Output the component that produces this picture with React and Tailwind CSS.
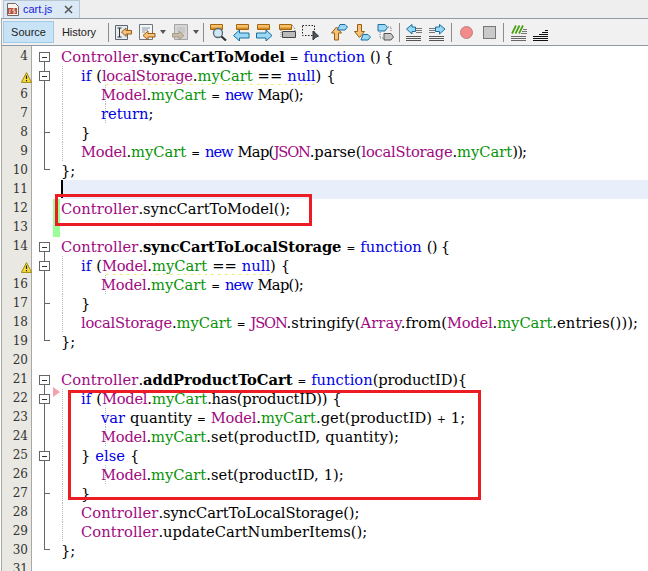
import React from "react";

const P = "text-[#a0097f]";
const G = "text-[#079307]";
const B = "text-[#0000e6]";
const K = "text-black";
const S = "font-bold text-black tracking-[-0.05px]";
const Y = "underline decoration-wavy decoration-[#e8e84a] decoration-1 underline-offset-2";
const CTRL = P + " tracking-[0.1px]";
const MODEL = P + " tracking-[-0.25px]";
const LS = P + " tracking-[-0.25px]";
const JS = P + " tracking-[-1.2px]";

const c = (x) => [x, CTRL];
const m = () => ["Model", MODEL];
const ls = () => ["localStorage", LS];
const js = () => ["JSON", JS];
const g = (x) => [x, G];
const k = (x) => [x, B];
const t = (x) => [x, K];
const b = (x) => [x, S];
const tt = (x) => [x, K + " tracking-[-0.2px]"];
const tw = (x) => [x, K + " tracking-[0.1px]"];
const EQ = [t(" "), ["=", K + " text-[10.5px]"], t(" ")];
const NEW = ["new", B + " tracking-[-1.1px]"];
const MAP = (x) => [x, K + " tracking-[-0.7px]"];
const NewMap = [NEW, t(" "), MAP("Map();")];
const FN = [t(" "), ["() {", K + " tracking-[-0.8px]"]];

const lines = [
  { n: 4, f: "box", code: [c("Controller"), t("."), b("syncCartToModel"), ...EQ, k("function"), ...FN] },
  { n: 5, f: "box2", warn: true, g: [0], code: [t("    "), k("if"), t(" ("), ["localStorage", LS + " " + Y], [".", K + " " + Y], ["myCart", G + " " + Y], [" == ", K + " " + Y], ["null", B + " " + Y], t(") {")] },
  { n: 6, f: "line", g: [0, 1], code: [t("        "), m(), t("."), g("myCart"), ...EQ, ...NewMap] },
  { n: 7, f: "line", g: [0, 1], code: [t("        "), k("return"), t(";")] },
  { n: 8, f: "tee", g: [0], code: [t("    }")] },
  { n: 9, f: "line", g: [0], code: [t("    "), m(), t("."), g("myCart"), ...EQ, NEW, t(" "), MAP("Map("), js(), t(".parse("), ls(), t("."), g("myCart"), ["));", K + " tracking-[-0.8px]"]] },
  { n: 10, f: "end", code: [t("};")] },
  { n: 11, hl: true, caret: true, code: [] },
  { n: 12, ch: true, code: [c("Controller"), t(".syncCartToModel();")] },
  { n: 13, ch: true, code: [] },
  { n: 14, f: "box", code: [c("Controller"), t("."), b("syncCartToLocalStorage"), ...EQ, k("function"), ...FN] },
  { n: 15, f: "box2", warn: true, g: [0], code: [t("    "), k("if"), t(" ("), ["Model", MODEL + " " + Y], [".", K + " " + Y], ["myCart", G + " " + Y], [" == ", K + " " + Y], ["null", B + " " + Y], t(") {")] },
  { n: 16, f: "line", g: [0, 1], code: [t("        "), m(), t("."), g("myCart"), ...EQ, ...NewMap] },
  { n: 17, f: "tee", g: [0], code: [t("    }")] },
  { n: 18, f: "line", g: [0], code: [t("    "), ls(), t("."), g("myCart"), ...EQ, js(), tw(".stringify("), c("Array"), tw(".from("), m(), t("."), g("myCart"), tw(".entries()));")] },
  { n: 19, f: "end", code: [t("};")] },
  { n: 20, code: [] },
  { n: 21, f: "box", code: [c("Controller"), t("."), b("addProductToCart"), ...EQ, k("function"), tt("(productID){")] },
  { n: 22, f: "box2", mark: true, g: [0], code: [t("    "), k("if"), t(" ("), m(), t("."), g("myCart"), tt(".has(productID)) {")] },
  { n: 23, f: "line", g: [0, 1], code: [t("        "), k("var"), t(" quantity "), ["=", K + " text-[10.5px]"], t(" "), m(), t("."), g("myCart"), t(".get(productID) "), ["+", K + " text-[10.5px]"], t(" 1;")] },
  { n: 24, f: "line", g: [0, 1], code: [t("        "), m(), t("."), g("myCart"), tw(".set(productID, quantity);")] },
  { n: 25, f: "box2", g: [0], code: [t("    } "), k("else"), t(" {")] },
  { n: 26, f: "line", g: [0, 1], code: [t("        "), m(), t("."), g("myCart"), t(".set(productID, 1);")] },
  { n: 27, f: "tee", g: [0], code: [t("    }")] },
  { n: 28, f: "line", g: [0], code: [t("    "), c("Controller"), [".syncCartToLocalStorage();", K + " tracking-[-0.12px]"]] },
  { n: 29, f: "line", g: [0], code: [t("    "), c("Controller"), t(".updateCartNumberItems();")] },
  { n: 30, f: "end", code: [t("};")] },
  { n: 31, code: [] },
];

function Fold({ f }) {
  if (!f) return null;
  const hasBox = f === "box" || f === "box2";
  return (
    <svg width="21" height="19" className="block" shapeRendering="crispEdges">
      {f === "box" && <path d="M12.500 14V19" stroke="#666" fill="none" />}
      {f === "box2" && <path d="M12.500 0V19" stroke="#666" fill="none" />}
      {f === "line" && <path d="M12.500 0V19" stroke="#666" fill="none" />}
      {f === "tee" && <path d="M12.500 0V19M12.500 9.500H18" stroke="#666" fill="none" />}
      {f === "end" && <path d="M12.500 0V8.500H18" stroke="#666" fill="none" />}
      {hasBox && (
        <>
          <rect x="7.500" y="5.500" width="10" height="9" fill="#fff" stroke="#666" />
          <path d="M10 10H15" stroke="#333" />
        </>
      )}
    </svg>
  );
}

function Warn() {
  return (
    <svg width="11" height="11" viewBox="0 0 11 11" className="absolute left-[19px] top-[6px]">
      <path d="M5.500 .6 10.600 10.400H.4Z" fill="#f7dc3c" stroke="#a08a10" strokeWidth="1" strokeLinejoin="round" />
      <path d="M5.500 3.500v3.500M5.500 8v1.200" stroke="#222" strokeWidth="1.200" />
    </svg>
  );
}

function Row({ l }) {
  return (
    <div className="flex h-[19px]">
      <div className="relative w-[31px] shrink-0 border-x border-x-[#a9a9a4] bg-[#e9e8e2] pr-[3px] text-right font-['DejaVu_Serif',serif] text-[12px] leading-[19px] text-[#333]">
        {l.warn ? <Warn /> : l.n}
      </div>
      <div className="w-[21px] shrink-0 bg-white">
        <Fold f={l.f} />
      </div>
      <div className="relative w-[8px] shrink-0 bg-white">
        {l.ch && <div className="absolute left-0 top-0 h-full w-[7px] bg-[#99ff99]" />}
        {l.mark && <div className="absolute left-0 -top-[2px] h-0 w-0 border-y-[5px] border-l-[7px] border-y-transparent border-l-[#f4a0b0]" />}
      </div>
      <div className={`relative min-w-0 flex-1 whitespace-pre font-['DejaVu_Serif',serif] text-[14.7px] leading-[19px] [word-spacing:0.33px] ${l.hl ? "bg-[#e9effa]" : "bg-white"}`}>
        {l.caret && <div className="absolute left-0 top-0 h-[18px] w-[2px] bg-black" />}
        {(l.g || []).map((i) => (
          <div key={i} className={`absolute top-0 h-full border-l border-dotted border-[#bbb] ${i === 0 ? "left-[1px]" : "left-[44px]"}`} />
        ))}
        <span className="relative">
          {l.code.map(([x, cl], i) => (
            <span key={i} className={cl}>{x}</span>
          ))}
        </span>
      </div>
    </div>
  );
}

const Sep = ({ className = "" }) => <div className={`h-[19px] w-px shrink-0 bg-[#8d8d8d] ${className}`} />;

const Ic = ({ children, className = "" }) => (
  <svg width="17" height="17" viewBox="0 0 17 17" className={`shrink-0 ${className}`} strokeLinejoin="round">
    {children}
  </svg>
);
const OR = { fill: "#f6c27a", stroke: "#9c5c10" };
const BL = { fill: "#9ad8f5", stroke: "#1b6f9f" };
const OTag = ({ x = 0, y = 0.5 }) => (
  <>
    <rect x={x + 0.5} y={y} width="12" height="5" fill="#f4c06c" stroke="#a4670f" />
    <rect x={x + 1} y={y + 3} width="11" height="1.500" fill="#d98b22" />
  </>
);
const Bars = ({ col }) => <path d="M0 12.500H15M0 14.500H15M0 16.500H15" stroke={col} fill="none" />;

const Drop = ({ className = "" }) => (
  <svg width="6" height="4" viewBox="0 0 6 4" className={`shrink-0 ${className}`}><path d="M0 0h6L3 4z" fill="#555" /></svg>
);

function Toolbar() {
  return (
    <div className="flex h-[27px] items-center border-b border-b-[#8f9aa3] border-l border-l-[#a9a9a4] bg-[#f1f1f1] pl-[1px]">
      <div className="flex h-[22px] w-[51px] shrink-0 items-center justify-center border border-[#9ecbe8] bg-[#c9e3f6] text-[#222]">Source</div>
      <div className="flex h-[21px] w-[50px] shrink-0 items-center justify-center text-[#222]">History</div>
      <Sep className="ml-[4px]" />
      <Ic className="ml-[6px]">
        <rect x=".5" y="1.500" width="12" height="14" fill="#e6ecf2" stroke="#5a6670" />
        <path d="M2.500 4h4M4.500 4v9M2.500 13h4" stroke="#333" fill="none" />
        <path d="M6.500 8 11 4v2.500h5.500v3.500H11v2.500z" {...OR} />
      </Ic>
      <Ic className="ml-[7px]">
        <rect x=".5" y=".5" width="13" height="15" fill="#f4f4f4" stroke="#6d7780" />
        <path d="M3 4h8M3 6h6M3 8h3" stroke="#8a9aa8" />
        <path d="M4 11.500 9 7v2.500h7V13H9v3z" {...OR} />
      </Ic>
      <Drop className="ml-[4px]" />
      <Ic className="ml-[6px]">
        <rect x="2.500" y=".5" width="13" height="15" fill="#d6d6d6" stroke="#a5a5a5" />
        <path d="M5 4h8M5 6h8M9 8h4" stroke="#bcbcbc" />
        <path d="M.5 9.500H7V7l5 4.500L7 16v-3H.5z" fill="#c8baa4" stroke="#a39a88" />
      </Ic>
      <Drop className="ml-[4px]" />
      <Sep className="ml-[4px]" />
      <div className="ml-[6px] flex items-center gap-[6px]">
        <Ic>
          <OTag />
          <circle cx="8" cy="9" r="4.500" fill="#cfe8f6" stroke="#5c6670" strokeWidth="1.300" />
          <path d="M11.500 12.500 16 16.500" stroke="#333" strokeWidth="2.200" />
        </Ic>
        <Ic>
          <OTag x={3} />
          <path d="M.5 11.500 6.500 6v3H16v5H6.500v3z" {...BL} />
        </Ic>
        <Ic>
          <OTag x={1} />
          <path d="M16 11.500 10 6v3H.5v5H10v3z" {...BL} />
        </Ic>
        <Ic>
          <OTag />
          <path d="M13 1l3 4v3" stroke="#777" strokeDasharray="1 1" fill="none" />
          <rect x="3.500" y="7.500" width="13" height="6" fill="#bbb" stroke="#444" />
          <path d="M2 6v8" stroke="#777" strokeDasharray="1 1" />
        </Ic>
        <Ic>
          <rect x=".5" y="1.500" width="12" height="10" fill="none" stroke="#222" strokeDasharray="1.500 1.500" />
          <path d="M11 7v9l2.500-2.500L16.500 12z" fill="#4a5560" stroke="#333" />
        </Ic>
      </div>
      <div className="ml-[12px] flex items-center gap-[6px]">
        <Ic>
          <path d="M3.500 16V9H.5L5.500 3l5 6H7.500v7z" {...OR} />
          <path d="M9 .5h5l2.500 2.500L14 6H6.500z" {...BL} />
        </Ic>
        <Ic>
          <path d="M3.500 .5v7H.5l5 6 5-6H7.500v-7z" {...OR} />
          <path d="M9 10.500h5l2.500 2.500L14 16H7z" {...BL} />
        </Ic>
        <Ic>
          <path d="M1 .5h7l2.500 3L8 7H1z" {...BL} />
          <path d="M7 9.500h7l2.500 3.500L14 16H7z" fill="#c6c6c6" stroke="#555" />
          <path d="M3 8v6h3M11 3h3v5" stroke="#777" strokeDasharray="1 1" fill="none" />
        </Ic>
      </div>
      <Sep className="ml-[5px]" />
      <div className="ml-[6px] flex items-center gap-[6px]">
        <Ic>
          <path d="M10 4.500h6M10 6.500h6M10 8.500h6" stroke="#777" />
          <path d="M.5 5 6 .5V3h3.500v4.500H6V10z" {...BL} />
          <Bars col="#555" />
        </Ic>
        <Ic>
          <path d="M0 4.500h6M0 6.500h6M0 8.500h6" stroke="#777" />
          <path d="M16 5 10.500 .5V3H6.500v4.500h4V10z" {...BL} />
          <Bars col="#555" />
        </Ic>
      </div>
      <Sep className="ml-[5px]" />
      <svg width="13" height="13" className="ml-[8px] shrink-0">
        <circle cx="6.500" cy="6.500" r="6" fill="#f58a8a" stroke="#b98080" />
      </svg>
      <svg width="13" height="13" className="ml-[10px] shrink-0">
        <rect x=".5" y=".5" width="12" height="12" fill="#c9c9c9" stroke="#777" />
      </svg>
      <Sep className="ml-[7px]" />
      <Ic className="ml-[7px]">
        <path d="M1 9.500 5 1.500M4.500 9.500 8.500 1.500M8 9.500l4-8" stroke="#4aa010" strokeWidth="1.700" fill="none" />
        <path d="M12 5.500h4M11 7.500h5M10 9.500h6" stroke="#777" />
        <Bars col="#666" />
      </Ic>
      <Ic className="ml-[5px]">
        <path d="M12 6.500h3M9 8.500h6M6 10.500h9" stroke="#111" />
        <Bars col="#111" />
      </Ic>
    </div>
  );
}

export default function App() {
  return (
    <div className="relative h-[571px] w-[648px] overflow-hidden bg-white pl-[1px] font-['Liberation_Sans',sans-serif] text-[11px]">
      <div className="flex h-[19px] items-end border-b border-[#8f9aa3] bg-[#eeeeee]">
        <div className="ml-[2px] flex h-[18px] w-[77px] items-center border-x border-t border-[#b8c6d2] bg-[#dbe9f6] pl-[3px]">
          <svg width="12" height="13" viewBox="0 0 12 13" className="shrink-0">
            <path d="M.5.500h8l3 3v9H.500z" fill="#f7f3ef" stroke="#766" />
            <rect x="1" y="5" width="9" height="6" fill="#b5533f" />
            <path d="M3 6v3.500H2M8 6H6v2h2v2H6" stroke="#fff" fill="none" strokeWidth=".8" />
          </svg>
          <span className="ml-[4px] text-[#1a1ae0]">cart.js</span>
          <svg width="9" height="9" viewBox="0 0 9 9" className="ml-[12px] shrink-0"><path d="M1 1l7 7M8 1 1 8" stroke="#555" strokeWidth="1.500" /></svg>
        </div>
      </div>
      <Toolbar />
      <div>
        <div className="h-px w-[31px] border-x border-x-[#a9a9a4] bg-[#e9e8e2]" />
        {lines.map((l) => <Row key={l.n} l={l} />)}
      </div>
      <div className="absolute left-[55px] top-[194px] h-[32px] w-[257px] border-[3px] border-[#ed1c24]" />
      <div className="absolute left-[68px] top-[390px] h-[110px] w-[413px] border-[3px] border-[#ed1c24]" />
    </div>
  );
}
